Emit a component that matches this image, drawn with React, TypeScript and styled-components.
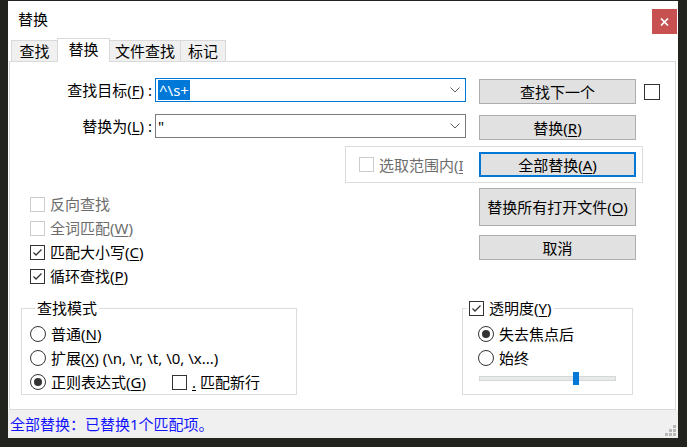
import React from "react";
import styled, { createGlobalStyle } from "styled-components";

const GlobalStyle = createGlobalStyle`
  html, body { margin: 0; padding: 0; background: #22221f; }
  body {
    font-family: "Noto Sans", "Noto Sans CJK SC", "Liberation Sans", sans-serif;
    font-size: 15px;
    line-height: 20px;
    color: #000;
  }
  * { box-sizing: border-box; }
`;

const Page = styled.div`
  padding: 1px 0 0 8px;
`;

const Window = styled.div`
  width: 670px;
  height: 437px;
  background: #fff;
  display: flex;
  flex-direction: column;
`;

const TitleBar = styled.div`
  height: 37px;
  flex-shrink: 0;
  display: flex;
  justify-content: space-between;
  align-items: flex-start;
`;

const Title = styled.div`
  margin: 8px 0 0 10px;
`;

const CloseButton = styled.div`
  width: 25px;
  height: 25px;
  margin: 8px 1px 0 0;
  background: #c75050;
  display: flex;
  align-items: center;
  justify-content: center;
`;

const TabStrip = styled.div`
  height: 24px;
  flex-shrink: 0;
  margin-bottom: -1px;
  padding-left: 3px;
  display: flex;
  align-items: flex-end;
  position: relative;
  z-index: 1;
`;

const Tab = styled.div<{ $active?: boolean; $w: number }>`
  width: ${(p) => p.$w}px;
  height: ${(p) => (p.$active ? 24 : 22)}px;
  margin-left: -1px;
  &:first-child { margin-left: 0; }
  background: ${(p) => (p.$active ? "#fff" : "#f0f0f0")};
  border: 1px solid #d9d9d9;
  border-bottom: ${(p) => (p.$active ? "none" : "1px solid #d9d9d9")};
  display: flex;
  align-items: center;
  justify-content: center;
  padding-bottom: ${(p) => (p.$active ? 3 : 0)}px;
  position: relative;
  z-index: ${(p) => (p.$active ? 2 : 1)};
  white-space: nowrap;
`;

const Panel = styled.div`
  flex: 1;
  margin: 0 2px 0 1px;
  border: 1px solid #d9d9d9;
  background: #fff;
  padding-top: 16px;
  display: flex;
  flex-direction: column;
`;

const FieldRow = styled.div<{ $mt?: number }>`
  display: flex;
  align-items: flex-start;
  margin-top: ${(p) => p.$mt ?? 0}px;
`;

const FieldLabel = styled.div`
  width: 142px;
  margin-right: 3px;
  text-align: right;
  line-height: 24px;
  white-space: nowrap;
`;

const Combo = styled.div<{ $focused?: boolean }>`
  width: 311px;
  height: 24px;
  border: 1px solid ${(p) => (p.$focused ? "#0078d7" : "#7a7a7a")};
  background: #fff;
  display: flex;
  align-items: center;
  padding: 0 5px 0 2px;
`;

const ComboText = styled.div`
  flex: 1;
  font-family: "Noto Sans", "Liberation Sans", sans-serif;
  font-size: 15px;
  line-height: 16px;
`;

const Selected = styled.span`
  background: #0078d7;
  color: #fff;
  padding: 0 1px;
`;

const Button = styled.div<{ $h?: number; $default?: boolean; $ml?: number; $mt?: number }>`
  width: 157px;
  height: ${(p) => p.$h ?? 25}px;
  margin-left: ${(p) => p.$ml ?? 0}px;
  margin-top: ${(p) => p.$mt ?? 0}px;
  flex-shrink: 0;
  background: #e1e1e1;
  border: ${(p) => (p.$default ? "2px solid #0078d7" : "1px solid #adadad")};
  display: flex;
  align-items: center;
  justify-content: center;
  white-space: nowrap;
`;

const Mn = styled.span`
  text-decoration: underline;
  text-underline-offset: 2px;
`;

const Caption = styled.span`
  white-space: nowrap;
`;

const Box = styled.span<{ $disabled?: boolean }>`
  width: 15px;
  height: 15px;
  flex-shrink: 0;
  border: 1px solid ${(p) => (p.$disabled ? "#cccccc" : "#333333")};
  background: #fff;
  display: flex;
  align-items: center;
  justify-content: center;
`;

const LoneBox = styled(Box)`
  width: 16px;
  height: 16px;
  margin: 6px 0 0 8px;
`;

const CheckOption = styled.div<{ $disabled?: boolean; $w?: number }>`
  display: flex;
  align-items: center;
  gap: 5px;
  height: 24px;
  color: ${(p) => (p.$disabled ? "#6d6d6d" : "#000")};
  white-space: nowrap;
  ${(p) => (p.$w ? `width: ${p.$w}px; overflow: hidden; flex-shrink: 0;` : "")}
`;

const RangeRow = styled.div`
  margin-top: 6px;
  padding-left: 335px;
  display: flex;
`;

const RangeGroup = styled.div`
  width: 298px;
  height: 37px;
  border: 1px solid #dcdcdc;
  padding-left: 13px;
  display: flex;
  align-items: center;
`;

const OptionsRow = styled.div`
  margin-top: 5px;
  display: flex;
  align-items: flex-start;
`;

const LeftColumn = styled.div`
  margin-left: 20px;
  width: 449px;
  padding-top: 4px;
  display: flex;
  flex-direction: column;
`;

const RightColumn = styled.div`
  display: flex;
  flex-direction: column;
  gap: 9px;
`;

const GroupsRow = styled.div`
  margin-top: 10px;
  display: flex;
  align-items: flex-start;
`;

const Group = styled.fieldset<{ $w: number; $ml: number; $pl: number }>`
  margin: 0 0 0 ${(p) => p.$ml}px;
  width: ${(p) => p.$w}px;
  height: 97px;
  min-width: 0;
  border: 1px solid #dcdcdc;
  padding: 4px 0 0 ${(p) => p.$pl}px;
`;

const GroupLegend = styled.legend<{ $shift: number }>`
  margin-left: ${(p) => p.$shift}px;
  padding: 0 2px;
  line-height: 20px;
  background: #fff;
  display: flex;
  align-items: center;
  gap: 5px;
  white-space: nowrap;
`;

const RadioOption = styled.div<{ $w?: number }>`
  display: flex;
  align-items: center;
  gap: 5px;
  height: 24px;
  white-space: nowrap;
  ${(p) => (p.$w ? `width: ${p.$w}px; flex-shrink: 0;` : "")}
`;

const RadioRow = styled.div`
  display: flex;
  align-items: center;
`;

const Circle = styled.span<{ $on?: boolean }>`
  width: 16px;
  height: 16px;
  flex-shrink: 0;
  border-radius: 50%;
  border: 1px solid #333;
  background: #fff;
  display: flex;
  align-items: center;
  justify-content: center;
  &::after {
    content: "";
    width: 8px;
    height: 8px;
    border-radius: 50%;
    background: #333;
    display: ${(p) => (p.$on ? "block" : "none")};
  }
`;

const Slider = styled.div`
  position: relative;
  margin: 2px 0 0 1px;
  width: 137px;
  height: 13px;
  display: flex;
  align-items: center;
`;

const Track = styled.div`
  width: 100%;
  height: 5px;
  background: #e7eaea;
  border: 1px solid #d6d6d6;
`;

const Thumb = styled.div`
  position: absolute;
  top: 0;
  width: 6px;
  height: 13px;
  background: #0078d7;
`;

const StatusBar = styled.div`
  height: 28px;
  flex-shrink: 0;
  background: #f0f0f0;
  display: flex;
  justify-content: space-between;
  align-items: center;
  padding-left: 2px;
`;

const StatusText = styled.div`
  color: #1414ff;
`;

const Grip = styled.svg`
  align-self: flex-end;
  margin: 0 2px 2px 0;
`;

const Check = () => (
  <svg width="13" height="13" viewBox="0 0 13 13">
    <polyline points="2.5,6.5 5,9 10.5,3.5" fill="none" stroke="#333" strokeWidth="1.3" />
  </svg>
);

const Chevron = () => (
  <svg width="10" height="6" viewBox="0 0 10 6">
    <polyline points="0.5,0.5 5,5 9.5,0.5" fill="none" stroke="#606060" strokeWidth="1" />
  </svg>
);

const sliderValue = 0.69;

export default function App() {
  return (
    <>
      <GlobalStyle />
      <Page>
        <Window>
          <TitleBar>
            <Title>替换</Title>
            <CloseButton>
              <svg width="9" height="8" viewBox="0 0 9 8">
                <path d="M1 0.5 L8 7.5 M8 0.5 L1 7.5" stroke="#fff" strokeWidth="1.7" />
              </svg>
            </CloseButton>
          </TitleBar>
          <TabStrip>
            <Tab $w={47}>查找</Tab>
            <Tab $w={53} $active>替换</Tab>
            <Tab $w={72}>文件查找</Tab>
            <Tab $w={46}>标记</Tab>
          </TabStrip>
          <Panel>
            <FieldRow>
              <FieldLabel>
                查找目标(<Mn>F</Mn>) :
              </FieldLabel>
              <Combo $focused>
                <ComboText>
                  <Selected>^\s+</Selected>
                </ComboText>
                <Chevron />
              </Combo>
              <Button $ml={13} $mt={1}>查找下一个</Button>
              <LoneBox />
            </FieldRow>
            <FieldRow $mt={10}>
              <FieldLabel>
                替换为(<Mn>L</Mn>) :
              </FieldLabel>
              <Combo>
                <ComboText>"</ComboText>
                <Chevron />
              </Combo>
              <Button $ml={13} $mt={1}>
                <Caption>替换(<Mn>R</Mn>)</Caption>
              </Button>
            </FieldRow>
            <RangeRow>
              <RangeGroup>
                <CheckOption $disabled $w={104}>
                  <Box $disabled />
                  <Caption>选取范围内(<Mn>I</Mn>)</Caption>
                </CheckOption>
                <Button $default $ml={16}>
                  <Caption>全部替换(<Mn>A</Mn>)</Caption>
                </Button>
              </RangeGroup>
            </RangeRow>
            <OptionsRow>
              <LeftColumn>
                <CheckOption $disabled>
                  <Box $disabled />
                  <Caption>反向查找</Caption>
                </CheckOption>
                <CheckOption $disabled>
                  <Box $disabled />
                  <Caption>全词匹配(<Mn>W</Mn>)</Caption>
                </CheckOption>
                <CheckOption>
                  <Box><Check /></Box>
                  <Caption>匹配大小写(<Mn>C</Mn>)</Caption>
                </CheckOption>
                <CheckOption>
                  <Box><Check /></Box>
                  <Caption>循环查找(<Mn>P</Mn>)</Caption>
                </CheckOption>
              </LeftColumn>
              <RightColumn>
                <Button $h={38}>
                  <Caption>替换所有打开文件(<Mn>O</Mn>)</Caption>
                </Button>
                <Button>取消</Button>
              </RightColumn>
            </OptionsRow>
            <GroupsRow>
              <Group $w={276} $ml={11} $pl={8}>
                <GroupLegend $shift={5}>查找模式</GroupLegend>
                <RadioOption>
                  <Circle />
                  <Caption>普通(<Mn>N</Mn>)</Caption>
                </RadioOption>
                <RadioOption>
                  <Circle />
                  <Caption>扩展(<Mn>X</Mn>) (\n, \r, \t, \0, \x...)</Caption>
                </RadioOption>
                <RadioRow>
                  <RadioOption $w={142}>
                    <Circle $on />
                    <Caption>正则表达式(<Mn>G</Mn>)</Caption>
                  </RadioOption>
                  <CheckOption>
                    <Box />
                    <Caption>
                      <Mn>.</Mn> 匹配新行
                    </Caption>
                  </CheckOption>
                </RadioRow>
              </Group>
              <Group $w={171} $ml={165} $pl={15}>
                <GroupLegend $shift={-11}>
                  <Box><Check /></Box>
                  <Caption>透明度(<Mn>Y</Mn>)</Caption>
                </GroupLegend>
                <RadioOption>
                  <Circle $on />
                  <Caption>失去焦点后</Caption>
                </RadioOption>
                <RadioOption>
                  <Circle />
                  <Caption>始终</Caption>
                </RadioOption>
                <Slider>
                  <Track />
                  <Thumb style={{ left: `${sliderValue * 137 - 0.5}px` }} />
                </Slider>
              </Group>
            </GroupsRow>
          </Panel>
          <StatusBar>
            <StatusText>全部替换：已替换1个匹配项。</StatusText>
            <Grip width="11" height="11" viewBox="0 0 11 11">
              <g fill="#b8b8b8">
                <rect x="8" y="0" width="3" height="3" />
                <rect x="4" y="4" width="3" height="3" />
                <rect x="8" y="4" width="3" height="3" />
                <rect x="0" y="8" width="3" height="3" />
                <rect x="4" y="8" width="3" height="3" />
                <rect x="8" y="8" width="3" height="3" />
              </g>
            </Grip>
          </StatusBar>
        </Window>
      </Page>
    </>
  );
}
